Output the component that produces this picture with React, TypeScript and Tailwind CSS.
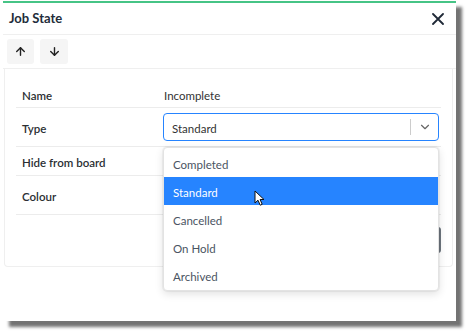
import React from 'react';
import { ArrowUp, ArrowDown, ChevronDown } from 'lucide-react';

const options = ['Completed', 'Standard', 'Cancelled', 'On Hold', 'Archived'];

const Row: React.FC<{ label: string; h: string; children?: React.ReactNode }> = ({ label, h, children }) => (
    <div className={`flex items-center border-b border-[#ececec] ${h}`}>
        <div className="w-[148px] pl-[6px] pt-[4px] text-[11.5px] font-semibold text-[#2b2f33]">{label}</div>
        <div className="flex-1 relative h-full flex items-center">{children}</div>
    </div>
);

export default function App() {
    return (
        <div className="w-[469px] h-[333px] bg-white overflow-hidden" style={{ fontFamily: 'Lato, "Open Sans", sans-serif' }}>
            <div className="ml-[3px] mt-[1px] w-[453px] h-[320px] bg-white border-t-2 border-[#46c486] shadow-[6px_6px_3px_rgba(0,0,0,0.55)] flex flex-col">
                {/* header */}
                <div className="h-[32px] flex items-center justify-between pl-[6px] pr-[12px] border-b border-[#efefef]">
                    <span className="text-[13px] font-bold text-[#222c3a] pt-[1px]">Job State</span>
                    <svg width="12" height="12" viewBox="0 0 12 12" className="text-[#1f2937]">
                        <path d="M1 1L11 11M11 1L1 11" stroke="currentColor" strokeWidth="1.8" strokeLinecap="round" />
                    </svg>
                </div>

                {/* toolbar */}
                <div className="h-[34px] flex items-center gap-[6px] pl-[4px] border-b border-[#efefef]">
                    <button className="w-[27px] h-[25px] rounded-[3px] bg-[#f5f5f5] flex items-center justify-center">
                        <ArrowUp className="w-[13px] h-[13px] text-[#222]" strokeWidth={2.6} />
                    </button>
                    <button className="w-[28px] h-[25px] rounded-[3px] bg-[#f5f5f5] flex items-center justify-center">
                        <ArrowDown className="w-[13px] h-[13px] text-[#222]" strokeWidth={2.6} />
                    </button>
                </div>

                {/* body card */}
                <div className="ml-[1px] w-[449px] h-[198px] border border-t-0 border-[#efefef] rounded-b-[4px] px-[11px] pt-[12px] flex flex-col">
                    <Row label="Name" h="h-[27px]">
                        <span className="text-[11.5px] text-[#333] pt-[4px]">Incomplete</span>
                    </Row>
                    <Row label="Type" h="h-[39px]">
                        <div className="w-[276px] h-[28px] -ml-[1px] border border-[#2684ff] rounded-[4px] flex items-center bg-white">
                            <span className="flex-1 pl-[8px] pt-[3px] text-[11.5px] text-[#333]">Standard</span>
                            <div className="w-px h-[16px] bg-[#cccccc]" />
                            <div className="w-[27px] flex items-center justify-center">
                                <ChevronDown className="w-[14px] h-[14px] text-[#666]" strokeWidth={2} />
                            </div>
                        </div>
                        {/* open menu */}
                        <div className="absolute left-[-1px] top-[39px] w-[276px] z-10 bg-white rounded-[4px] border border-[#e3e3e3] shadow-[0_0_0_1px_rgba(0,0,0,0.04),0_3px_8px_rgba(0,0,0,0.12)] py-[1px]">
                            {options.map((o) => (
                                <div
                                    key={o}
                                    className={`h-[28px] flex items-center pl-[9px] pt-[4px] text-[11.5px] ${o === 'Standard' ? 'bg-[#2684ff] text-white' : 'text-[#4a5462]'}`}
                                >
                                    {o}
                                </div>
                            ))}
                            <svg className="absolute left-[90px] top-[42px]" width="12" height="17" viewBox="0 0 12 17">
                                <path d="M1 1L1 13L4 10.2L6.2 15.2L8.2 14.3L6.1 9.5L10 9.5Z" fill="white" stroke="#111" strokeWidth="1" strokeLinejoin="round" />
                            </svg>
                        </div>
                    </Row>
                    <Row label="Hide from board" h="h-[29px]">
                        <div className="w-[26px] h-[14px] rounded-full bg-[#46c486]" />
                    </Row>
                    <Row label="Colour" h="h-[39px]" />
                    <div className="flex-1 flex items-center justify-end pb-[1px]">
                        <button className="w-[60px] h-[26px] rounded-[3px] bg-[#6c757d] text-white text-[12px]">Save</button>
                    </div>
                </div>
            </div>
        </div>
    );
}
